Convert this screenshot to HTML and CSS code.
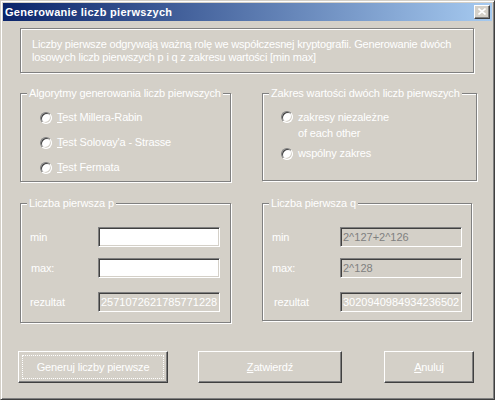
FILE: index.html
```html
<!DOCTYPE html>
<html lang="pl">
<head>
<meta charset="utf-8">
<title>Generowanie liczb pierwszych</title>
<link rel="stylesheet" href="styles.css">
</head>
<body>
<div class="window">
  <div class="titlebar">
    <span class="title">Generowanie liczb pierwszych</span>
    <span class="close">
      <svg width="8" height="7" viewBox="0 0 8 7"><path d="M0.5 0.5 L7.5 6.5 M7.5 0.5 L0.5 6.5" stroke="#fff" stroke-width="1.6" fill="none"/></svg>
    </span>
  </div>
  <div class="content">
    <div class="info">Liczby pierwsze odgrywają ważną rolę we współczesnej kryptografii. Generowanie dwóch<br>losowych liczb pierwszych p i q z zakresu wartości [min max]</div>

    <div class="row row-top">
      <div class="group g-algo">
        <span class="legend">Algorytmy generowania liczb pierwszych</span>
        <div class="radios">
          <div class="radio"><span class="dot"></span><span><u>T</u>est Millera-Rabin</span></div>
          <div class="radio"><span class="dot"></span><span><u>T</u>est Solovay'a - Strasse</span></div>
          <div class="radio"><span class="dot"></span><span><u>T</u>est Fermata</span></div>
        </div>
      </div>
      <div class="group g-range">
        <span class="legend">Zakres wartości dwóch liczb pierwszych</span>
        <div class="radios radios-range">
          <div class="radio radio-multi"><span class="dot"></span><span class="multi">zakresy niezależne<br>of each other</span></div>
          <div class="radio"><span class="dot"></span><span>wspólny zakres</span></div>
        </div>
      </div>
    </div>

    <div class="row row-mid">
      <div class="group g-p">
        <span class="legend">Liczba pierwsza p</span>
        <div class="fields">
          <div class="field"><span class="lbl">min</span><span class="edit"></span></div>
          <div class="field"><span class="lbl lbl-max">max:</span><span class="edit"></span></div>
          <div class="field field-res"><span class="lbl">rezultat</span><span class="edit edit-dis res">2571072621785771228</span></div>
        </div>
      </div>
      <div class="group g-q">
        <span class="legend">Liczba pierwsza q</span>
        <div class="fields">
          <div class="field"><span class="lbl">min</span><span class="edit edit-dis grey">2^127+2^126</span></div>
          <div class="field"><span class="lbl">max:</span><span class="edit edit-dis grey">2^128</span></div>
          <div class="field field-res"><span class="lbl lbl-res">rezultat</span><span class="edit edit-dis res">3020940984934236502</span></div>
        </div>
      </div>
    </div>

    <div class="buttons">
      <button class="btn btn-gen"><span class="focus">Generuj liczby pierwsze</span></button>
      <button class="btn btn-ok"><u>Z</u>atwierdź</button>
      <button class="btn btn-cancel"><u>A</u>nuluj</button>
    </div>
  </div>
</div>
</body>
</html>
```

FILE: styles.css
```css
* { box-sizing: border-box; }

html, body {
  margin: 0;
  padding: 0;
  background: #d4d0c8;
}

body {
  font-family: "Liberation Sans", Arial, sans-serif;
  font-size: 11px;
  line-height: 13px;
  color: #ffffff;
  letter-spacing: -0.15px;
}

.window {
  width: 495px;
  height: 400px;
  background: #d4d0c8;
  border: 1px solid;
  border-color: #d4d0c8 #404040 #404040 #d4d0c8;
  box-shadow: inset 1px 1px #ffffff, inset -1px -1px #808080;
  padding: 2px;
  display: flex;
  flex-direction: column;
}

.titlebar {
  height: 18px;
  flex: none;
  display: flex;
  align-items: flex-start;
  justify-content: space-between;
  background: linear-gradient(to right, #0a246a, #a6caf0);
}

.title {
  font-weight: bold;
  color: #ffffff;
  padding-left: 2px;
  line-height: 18px;
  font-size: 11px;
  letter-spacing: 0.3px;
}

.close {
  width: 16px;
  height: 14px;
  margin: 2px 2px 0 0;
  background: #d4d0c8;
  border: 1px solid;
  border-color: #ffffff #404040 #404040 #ffffff;
  box-shadow: inset -1px -1px #808080;
  display: flex;
  align-items: center;
  justify-content: center;
  padding-bottom: 1px;
}

.close svg { display: block; }

.content {
  flex: 1;
  display: flex;
  flex-direction: column;
  padding: 7px 0 0 17px;
}

.info {
  width: 454px;
  height: 45px;
  border: 1px solid #808080;
  box-shadow: inset 1px 1px #ffffff, 1px 1px #ffffff;
  padding: 9px 11px;
  white-space: nowrap;
  letter-spacing: -0.2px;
}

.row {
  display: flex;
  align-items: flex-start;
}

.row-top { margin-top: 20px; gap: 31px; }
.row-mid { margin-top: 21px; gap: 31px; }

.group {
  position: relative;
  border: 1px solid #808080;
  box-shadow: inset 1px 1px #ffffff, 1px 1px #ffffff;
}

.legend {
  position: absolute;
  top: -7px;
  left: 6px;
  padding: 0 2px;
  background: #d4d0c8;
  white-space: nowrap;
}

.g-algo { width: 211px; height: 89px; }
.g-range { width: 215px; height: 88px; }
.g-p { width: 211px; height: 120px; }
.g-q { width: 210px; height: 118px; }

.radios {
  display: flex;
  flex-direction: column;
  gap: 12px;
  padding: 17px 0 0 19px;
}

.radios-range {
  padding-left: 18px;
  gap: 6px;
}

.radio {
  display: flex;
  align-items: center;
  gap: 5px;
  white-space: nowrap;
}

.radio-multi { align-items: flex-start; }
.multi { line-height: 16px; margin-top: -2px; }

.dot {
  flex: none;
  width: 12px;
  height: 12px;
  border-radius: 50%;
  border: 1px solid;
  border-color: #808080 #ffffff #ffffff #808080;
  background: #ffffff;
  box-shadow: inset 1px 1px #404040, inset -1px -1px #d4d0c8;
}

.fields {
  display: flex;
  flex-direction: column;
  padding: 23px 0 0 9px;
  gap: 11px;
}

.field {
  display: flex;
  align-items: center;
}

.field-res { margin-top: 3px; }

.lbl {
  width: 68px;
  flex: none;
}

.lbl-max { padding-left: 1px; }
.lbl-res { padding-left: 2px; }

.edit {
  width: 122px;
  height: 20px;
  border: 1px solid;
  border-color: #808080 #ffffff #ffffff #808080;
  box-shadow: inset 1px 1px #404040, inset -1px -1px #d4d0c8;
  background: #ffffff;
  padding: 0 2px;
  line-height: 18px;
  white-space: nowrap;
  overflow: hidden;
  letter-spacing: 0;
}

.edit-dis { background: #d4d0c8; }
.grey { color: #808080; }
.res { color: #ffffff; padding-left: 2px; }

.buttons {
  display: flex;
  align-items: flex-start;
  margin-top: 28px;
  margin-left: -2px;
}

.btn {
  height: 32px;
  padding: 0;
  margin: 0;
  font-family: "Liberation Sans", Arial, sans-serif;
  font-size: 11px;
  line-height: 13px;
  letter-spacing: -0.15px;
  color: #ffffff;
  background: #d4d0c8;
  border: 1px solid;
  border-color: #ffffff #404040 #404040 #ffffff;
  box-shadow: inset -1px -1px #808080;
  display: flex;
  align-items: center;
  justify-content: center;
}

.btn-gen {
  width: 150px;
  outline: 1px dotted #ffffff;
  outline-offset: -5px;
}

.btn-ok { width: 144px; margin-left: 30px; }
.btn-cancel { width: 90px; margin-left: 42px; }
```
